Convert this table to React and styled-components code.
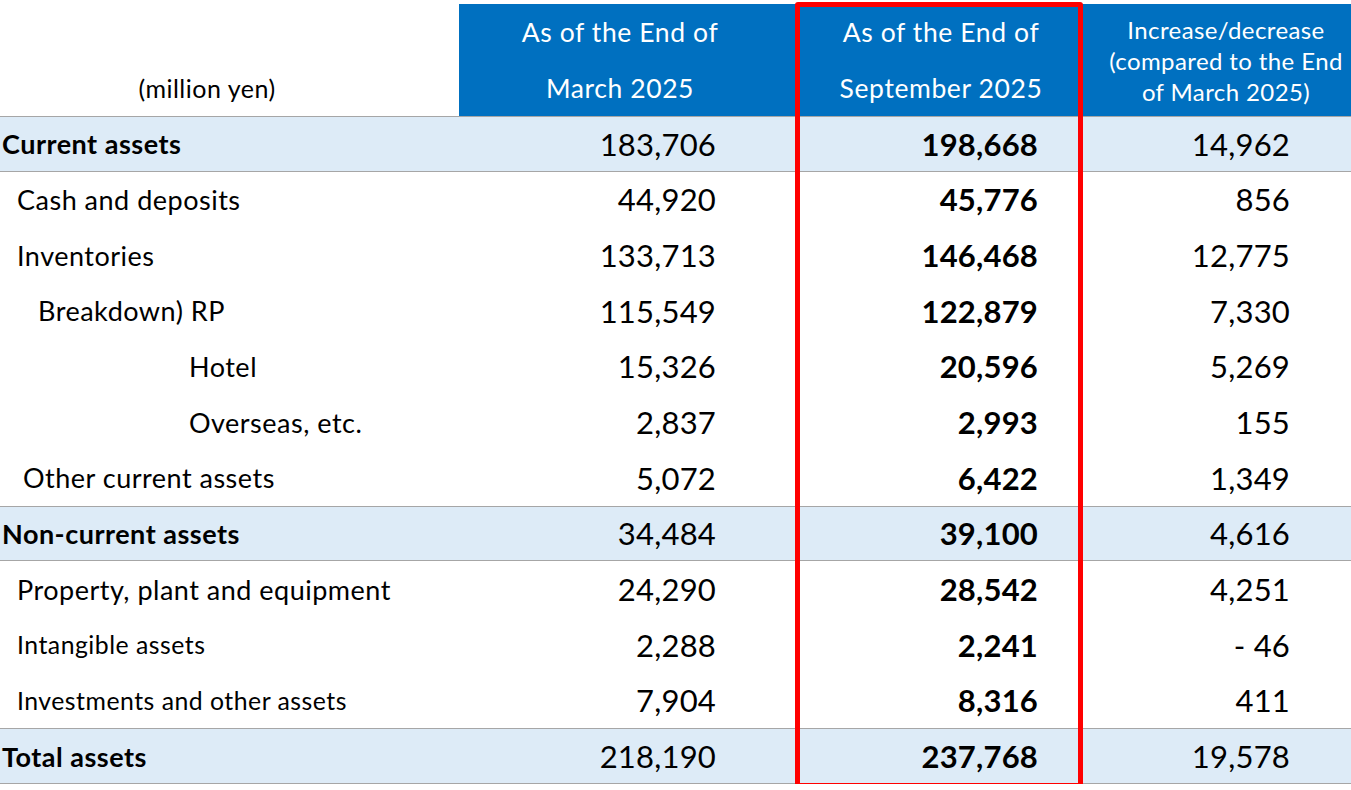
import styled, { createGlobalStyle } from 'styled-components';

const GlobalStyle = createGlobalStyle`
  html, body {
    margin: 0;
    padding: 0;
    background: #ffffff;
  }
  body {
    font-family: Lato, 'Liberation Sans', sans-serif;
    color: #000;
  }
`;

const rows = [
  { label: 'Current assets', band: true, indent: 2, values: ['183,706', '198,668', '14,962'] },
  { label: 'Cash and deposits', indent: 17, values: ['44,920', '45,776', '856'] },
  { label: 'Inventories', indent: 17, values: ['133,713', '146,468', '12,775'] },
  { label: 'Breakdown) RP', indent: 38, values: ['115,549', '122,879', '7,330'] },
  { label: 'Hotel', indent: 189, values: ['15,326', '20,596', '5,269'] },
  { label: 'Overseas, etc.', indent: 189, values: ['2,837', '2,993', '155'] },
  { label: 'Other current assets', indent: 23, values: ['5,072', '6,422', '1,349'] },
  { label: 'Non-current assets', band: true, indent: 2, values: ['34,484', '39,100', '4,616'] },
  { label: 'Property, plant and equipment', indent: 17, values: ['24,290', '28,542', '4,251'] },
  { label: 'Intangible assets', indent: 17, small: true, values: ['2,288', '2,241', '- 46'] },
  { label: 'Investments and other assets', indent: 17, small: true, values: ['7,904', '8,316', '411'] },
  { label: 'Total assets', band: true, indent: 2, values: ['218,190', '237,768', '19,578'] },
];

const Sheet = styled.div`
  position: relative;
  width: 1351px;
  padding-top: 4px;
`;

const Columns = `
  display: grid;
  grid-template-columns: 459px 322px 320px 250px;
`;

const HeaderRow = styled.div`
  ${Columns}
  height: 112px;
`;

const UnitCell = styled.div`
  display: flex;
  align-items: flex-end;
  justify-content: center;
  padding: 0 45px 13px 0;
  font-size: 25px;
  letter-spacing: 0.5px;
  box-sizing: border-box;
`;

const HeadCell = styled.div`
  background: #0070c0;
  color: #ffffff;
  display: flex;
  flex-direction: column;
  align-items: center;
  justify-content: center;
  font-size: ${(p) => (p.$small ? '24px' : '26.5px')};
  letter-spacing: ${(p) => (p.$small ? '0.4px' : '0.6px')};
  line-height: ${(p) => (p.$small ? '31px' : '56px')};
  text-align: center;
  white-space: nowrap;
`;

const Row = styled.div`
  ${Columns}
  height: 55.67px;
  box-sizing: border-box;
  background: ${(p) => (p.$band ? '#ddebf7' : '#ffffff')};
  border-top: ${(p) => (p.$band ? '1px solid #a6a6a6' : 'none')};
  border-bottom: ${(p) => (p.$band ? '1px solid #a6a6a6' : 'none')};
  align-items: center;
`;

const Label = styled.div`
  font-size: ${(p) => (p.$small ? '24.8px' : '27px')};
  letter-spacing: 0.5px;
  font-weight: ${(p) => (p.$bold ? 700 : 400)};
  padding-left: ${(p) => p.$indent}px;
  white-space: nowrap;
`;

const Num = styled.div`
  font-size: 31px;
  letter-spacing: 0.2px;
  font-weight: ${(p) => (p.$bold ? 700 : 400)};
  text-align: right;
  padding-right: ${(p) => p.$pr}px;
`;

const Highlight = styled.div`
  position: absolute;
  left: 795px;
  top: 2px;
  width: 288px;
  height: 786px;
  box-sizing: border-box;
  border: 5px solid #ff0000;
  border-radius: 3px;
  pointer-events: none;
`;

export default function App() {
  return (
    <>
      <GlobalStyle />
      <Sheet>
        <HeaderRow>
          <UnitCell>(million yen)</UnitCell>
          <HeadCell>
            <span>As of the End of</span>
            <span>March 2025</span>
          </HeadCell>
          <HeadCell>
            <span>As of the End of</span>
            <span>September 2025</span>
          </HeadCell>
          <HeadCell $small>
            <span>Increase/decrease</span>
            <span>(compared to the End</span>
            <span>of March 2025)</span>
          </HeadCell>
        </HeaderRow>
        {rows.map((r) => (
          <Row key={r.label} $band={r.band}>
            <Label $bold={r.band} $small={r.small} $indent={r.indent}>{r.label}</Label>
            <Num $pr={65}>{r.values[0]}</Num>
            <Num $pr={63} $bold>{r.values[1]}</Num>
            <Num $pr={61}>{r.values[2]}</Num>
          </Row>
        ))}
        <Highlight />
      </Sheet>
    </>
  );
}
